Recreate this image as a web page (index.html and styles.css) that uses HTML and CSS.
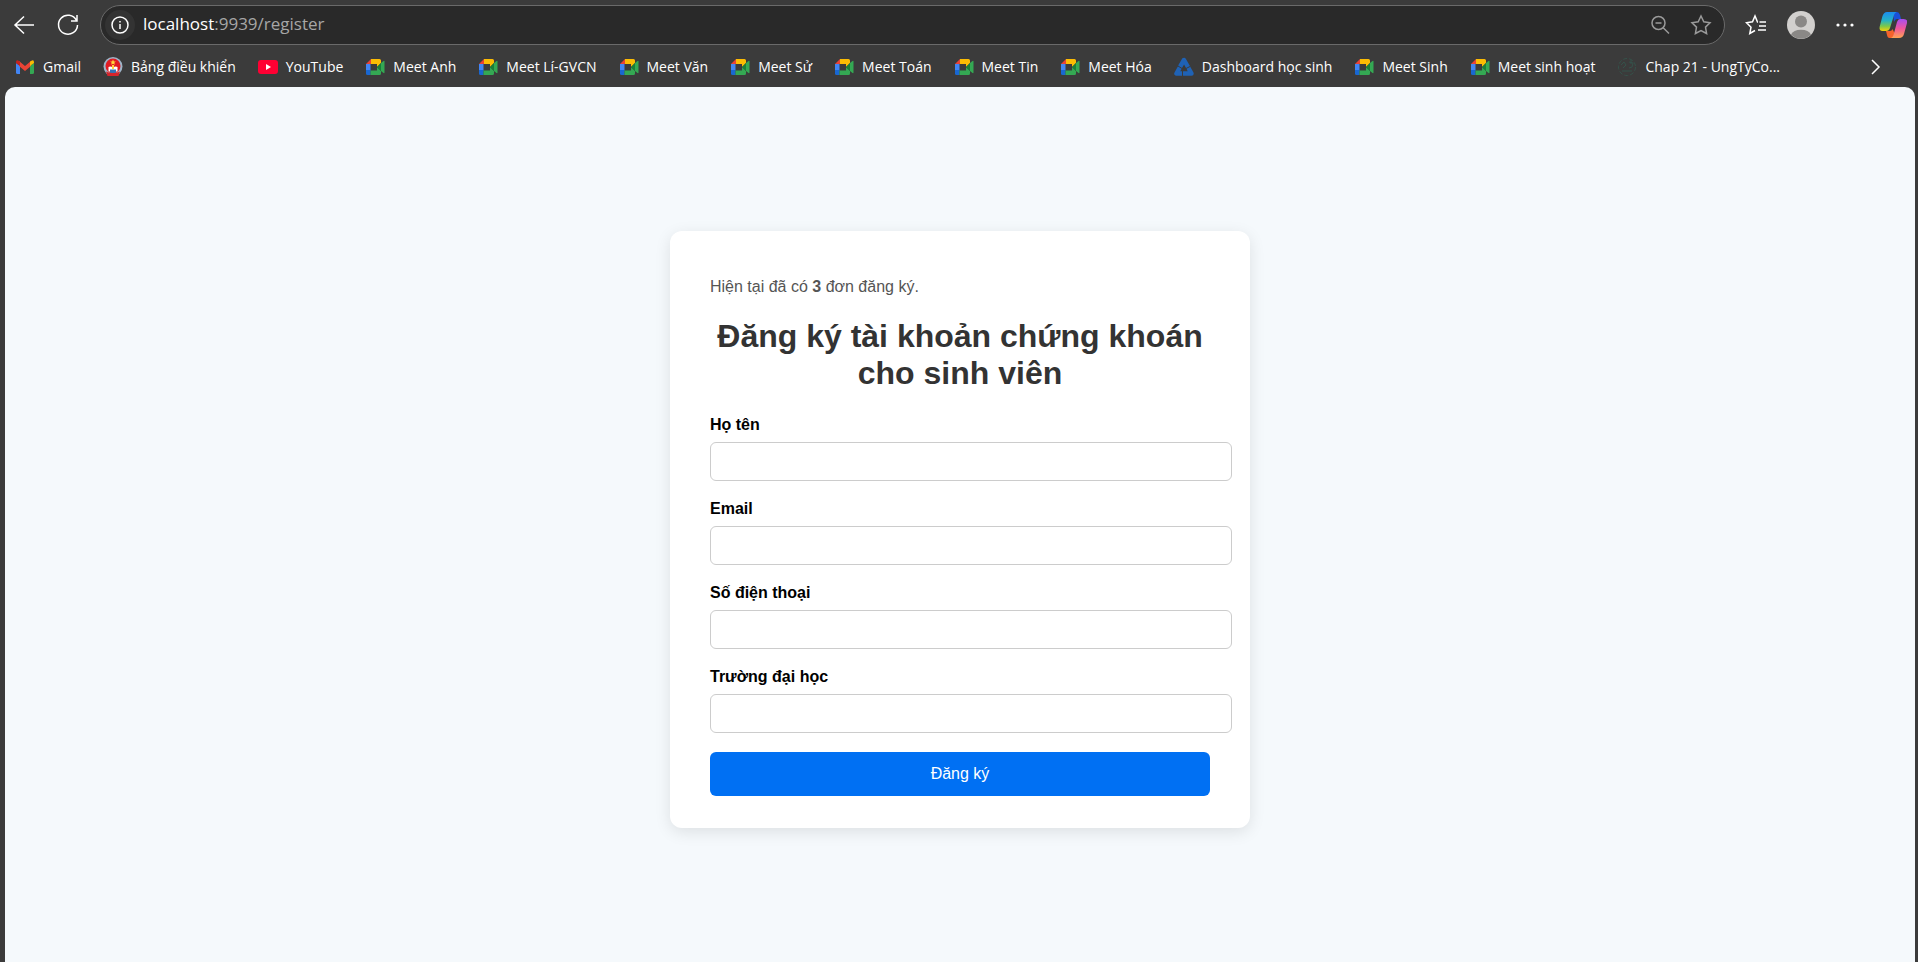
FILE: index.html
```html
<!DOCTYPE html>
<html lang="vi">
<head>
<meta charset="utf-8">
<title>Đăng ký</title>
<link rel="stylesheet" href="styles.css">
</head>
<body class="browser">
<svg class="defs" width="0" height="0" aria-hidden="true">
  <symbol id="meet" viewBox="0 0 20 20">
    <path fill="#ea4335" d="M1 7l5-5v5z"/>
    <path fill="#fbbc04" d="M6 2h8.500a1.500 1.500 0 0 1 1.500 1.500V6l-4 4V7H6z"/>
    <path fill="#4285f4" d="M1 7h4.500v6.500H1z"/>
    <path fill="#1967d2" d="M1 13h4.500v5H2.500A1.500 1.500 0 0 1 1 16.500z"/>
    <path fill="#34a853" d="M5.500 13.500H12V10l4 4v2.500a1.500 1.500 0 0 1-1.500 1.500h-9z"/>
    <path fill="#188038" d="M12 10l4-4v8z"/>
    <path fill="#34a853" d="M16 6l2.500-2q1-.5 1 .5v11q0 1-1 .5L16 14z"/>
  </symbol>
</svg>

<header class="chrome">
  <nav class="toolbar">
    <button class="tool" aria-label="Back"><svg width="24" height="24" viewBox="0 0 24 24"><path d="M22 12H3M12 3.500L3 12l9 8.500"/></svg></button>
    <button class="tool" aria-label="Reload"><svg width="24" height="24" viewBox="0 0 24 24"><path d="M20.500 7.500A9.500 9.500 0 1 0 21.500 12M21 2v6h-6"/></svg></button>
    <div class="address">
      <button class="info" aria-label="Site information"><svg width="20" height="20" viewBox="0 0 20 20"><circle cx="10" cy="10" r="8"/><path d="M10 9v5M10 6v1.500"/></svg></button>
      <span class="url"><span class="host">localhost</span>:9939/register</span>
      <button class="tool dim" aria-label="Zoom"><svg width="20" height="20" viewBox="0 0 20 20"><circle cx="8.500" cy="8" r="6.500"/><path d="M5.500 8h6M13.200 12.700L19 18.500"/></svg></button>
      <button class="tool dim" aria-label="Add to favorites"><svg width="22" height="22" viewBox="0 0 22 22"><path d="M11 2l2.800 5.800 6.200.9-4.500 4.400 1.100 6.400-5.600-3-5.600 3 1.100-6.400L2 8.700l6.200-.9z"/></svg></button>
    </div>
    <div class="actions">
      <button class="tool" aria-label="Favorites"><svg width="22" height="22" viewBox="0 0 22 22"><path d="M13 8h-.5L10 2 7.500 7.800 1.500 8.700l4.500 4.500-1.200 6.300L10 16.500M14.500 8H21M14 12h7M13 16h8"/></svg></button>
      <button class="tool" aria-label="Profile"><svg width="28" height="28" viewBox="0 0 28 28"><g stroke="none"><circle cx="14" cy="14" r="14" fill="#d2d0ce"/><circle cx="14" cy="10.500" r="6" fill="#8a8886"/><path fill="#8a8886" d="M4 23.500a10.500 7 0 0 1 20 0A14 14 0 0 1 4 23.500z"/></g></svg></button>
      <button class="tool" aria-label="Settings and more"><svg width="20" height="20" viewBox="0 0 20 20"><g stroke="none" fill="#fff"><circle cx="3" cy="10" r="1.600"/><circle cx="10" cy="10" r="1.600"/><circle cx="17" cy="10" r="1.600"/></g></svg></button>
      <button class="tool copilot" aria-label="Copilot"><svg width="28" height="28" viewBox="0 0 28 28">
        <defs>
          <linearGradient id="ca" x1="0" y1="0" x2="0" y2="1"><stop offset="0" stop-color="#1b8cf0"/><stop offset=".45" stop-color="#25b3c4"/><stop offset=".75" stop-color="#7cc84a"/><stop offset="1" stop-color="#f5d20a"/></linearGradient>
          <linearGradient id="cb" x1="0" y1="0" x2="0" y2="1"><stop offset="0" stop-color="#a54df0"/><stop offset=".5" stop-color="#f0569c"/><stop offset="1" stop-color="#ffa352"/></linearGradient>
        </defs>
        <g stroke="none">
          <path fill="#1a50d8" d="M14 1h4q2 0 3 3l1 4h-4q-2 0-3 3z"/>
          <path fill="#f4632c" d="M7 20h4q2 0 2.500-2l3 6q-1 3-4 3h-2q-2 0-2.500-3z"/>
          <path fill="url(#ca)" d="M8 1h9.500q-2 1-2.500 3l-4 13q-1 3-4 3H3.500Q0 20 .6 16L3.500 5Q5 1 8 1z"/>
          <path fill="url(#cb)" d="M21 8h3.500Q29 8 28 12l-3 11q-1 4-5 4h-8q2-1 2.500-3l3.500-13q1-3 3-3z"/>
        </g></svg></button>
    </div>
  </nav>

  <nav class="bookmarks">
    <a href="#"><svg viewBox="0 0 20 20"><path fill="#4285f4" d="M1 6l4 3v8H2.500Q1 17 1 15.500z"/><path fill="#34a853" d="M15 9l4-3v9.500q0 1.500-1.500 1.500H15z"/><path fill="#ea4335" d="M4 4l6 5 6-5v5l-6 5-6-5z"/><path fill="#c5221f" d="M1 5.500Q1 2 4 4l1 .8V9L1 6z"/><path fill="#fbbc04" d="M19 5.500Q19 2 16 4l-1 .8V9l4-3z"/></svg>Gmail</a>
    <a href="#"><svg viewBox="0 0 20 20"><circle cx="10" cy="9.500" r="9.500" fill="#9fb4c8"/><circle cx="10" cy="9" r="7.500" fill="#e11b22"/><path fill="#ffd93b" d="M10 2.500l.9 2h2l-1.600 1.200.6 2L10 6.700 8.100 7.700l.6-2-1.600-1.200h2z"/><path fill="#fff" d="M5.500 10q2-1 4.500.5 2.500-1.500 4.500-.5v4.500h-9z"/><path fill="#3472b5" d="M7 12.500h6V16H7z"/><path fill="#ffd93b" d="M9 8h2v4H9z"/><path fill="#d6242b" d="M3 14.500q7 3 14 0L15.500 19h-11z"/></svg>Bảng điều khiển</a>
    <a href="#"><svg viewBox="0 0 20 20"><rect y="3" width="20" height="14" rx="3" fill="#ff0033"/><path fill="#fff" d="M8 7l5 3-5 3z"/></svg>YouTube</a>
    <a href="#"><svg><use href="#meet"/></svg>Meet Anh</a>
    <a href="#"><svg><use href="#meet"/></svg>Meet Lí-GVCN</a>
    <a href="#"><svg><use href="#meet"/></svg>Meet Văn</a>
    <a href="#"><svg><use href="#meet"/></svg>Meet Sử</a>
    <a href="#"><svg><use href="#meet"/></svg>Meet Toán</a>
    <a href="#"><svg><use href="#meet"/></svg>Meet Tin</a>
    <a href="#"><svg><use href="#meet"/></svg>Meet Hóa</a>
    <a href="#"><svg viewBox="0 0 20 20"><g fill="none" stroke="#1f62b5" stroke-width="4.500" stroke-linejoin="round" stroke-linecap="round"><path d="M14 10l-4-7-3.500 6"/><path d="M5.500 11L2.500 16.500H8"/><path d="M10 16.500h7.500L15 12"/></g><path fill="none" stroke="#3b3b3b" d="M4 9l4 2.500M8.500 14v5M12 11.500l4-2"/></svg>Dashboard học sinh</a>
    <a href="#"><svg><use href="#meet"/></svg>Meet Sinh</a>
    <a href="#"><svg><use href="#meet"/></svg>Meet sinh hoạt</a>
    <a href="#"><svg viewBox="0 0 20 20"><g fill="none" stroke="#35524a"><circle cx="10" cy="10" r="8.500" stroke-dasharray="4 2"/><path d="M4 8l3-3 2 3-3 3M12 5l4 1-1 4-3 1M5 14h10M14 3v4"/></g></svg>Chap 21 - UngTyCo...</a>
    <button class="tool more" aria-label="More favorites"><svg width="20" height="20" viewBox="0 0 20 20"><path d="M6 3l7 7-7 7"/></svg></button>
  </nav>
</header>

<main class="page">
  <section class="card">
    <p class="count">Hiện tại đã có <strong>3</strong> đơn đăng ký.</p>
    <h1 class="title">Đăng ký tài khoản chứng khoán cho sinh viên</h1>
    <form class="form">
      <label for="name">Họ tên</label>
      <input id="name" type="text">
      <label for="email">Email</label>
      <input id="email" type="email">
      <label for="phone">Số điện thoại</label>
      <input id="phone" type="text">
      <label for="school">Trường đại học</label>
      <input id="school" type="text">
      <button class="submit" type="submit">Đăng ký</button>
    </form>
  </section>
</main>
</body>
</html>
```
FILE: styles.css
```css
.browser {
  margin: 0;
  min-height: 100vh;
  display: flex;
  flex-direction: column;
  background: #3b3b3b;
  font-family: "Open Sans", "Noto Sans", sans-serif;
  color: #fff;
}

.defs {
  position: absolute;
}

.toolbar {
  display: flex;
  align-items: center;
  gap: 20px;
  padding: 5px 11px 3px 12px;
}

.tool,
.info {
  display: flex;
  align-items: center;
  justify-content: center;
  padding: 0;
  border: 0;
  background: none;
  fill: none;
  stroke: #fff;
  stroke-width: 1.5;
}

.dim {
  stroke: #9a9a9a;
}

.address {
  flex: 1;
  display: flex;
  align-items: center;
  gap: 20px;
  box-sizing: border-box;
  height: 40px;
  padding: 0 12px 0 4px;
  border: 1px solid #6a6a6a;
  border-radius: 20px;
  background: #292929;
}

.info {
  width: 30px;
  height: 30px;
  border-radius: 50%;
  background: #333;
}

.url {
  flex: 1;
  margin-left: -12px;
  font-size: 17px;
  line-height: 20px;
  padding-bottom: 2px;
  color: #a6a6a6;
}

.host {
  color: #fff;
}

.actions {
  display: flex;
  align-items: center;
  gap: 20px;
}

.copilot {
  margin-left: 4px;
}

.bookmarks {
  display: flex;
  align-items: center;
  gap: 22px;
  height: 37px;
  padding: 0 32px 2px 15px;
  font-size: 14px;
}

.bookmarks a {
  display: flex;
  align-items: center;
  gap: 8px;
  color: #fff;
  text-decoration: none;
  white-space: nowrap;
}

.bookmarks a svg {
  width: 20px;
  height: 20px;
}

.more {
  margin-left: auto;
}

.page {
  flex: 1;
  display: flex;
  align-items: center;
  justify-content: center;
  margin: 0 3px 0 5px;
  padding-top: 10px;
  border-radius: 10px 10px 0 0;
  background: #f5f9fc;
  font-family: "Liberation Sans", Arial, sans-serif;
  font-size: 16px;
  color: #000;
}

.card {
  width: 500px;
  padding: 31px 40px 32px;
  border-radius: 12px;
  background: #fff;
  box-shadow: 0 4px 16px rgba(0, 0, 0, 0.1);
}

.count {
  margin: 16px 0 22px;
  line-height: 18px;
  color: #555;
}

.title {
  margin: 0 0 24px;
  font-size: 32px;
  line-height: 37px;
  text-align: center;
  color: #333;
}

.form {
  display: flex;
  flex-direction: column;
}

.form label {
  margin-bottom: 8px;
  line-height: 18px;
  font-weight: bold;
}

.form input {
  width: 100%;
  height: 17px;
  margin-bottom: 19px;
  padding: 10px;
  border: 1px solid #ccc;
  border-radius: 6px;
  background: #fff;
  font: inherit;
}

.submit {
  padding: 12px;
  border: 0;
  border-radius: 6px;
  background: #0070f3;
  font: inherit;
  line-height: 20px;
  color: #fff;
}
```
